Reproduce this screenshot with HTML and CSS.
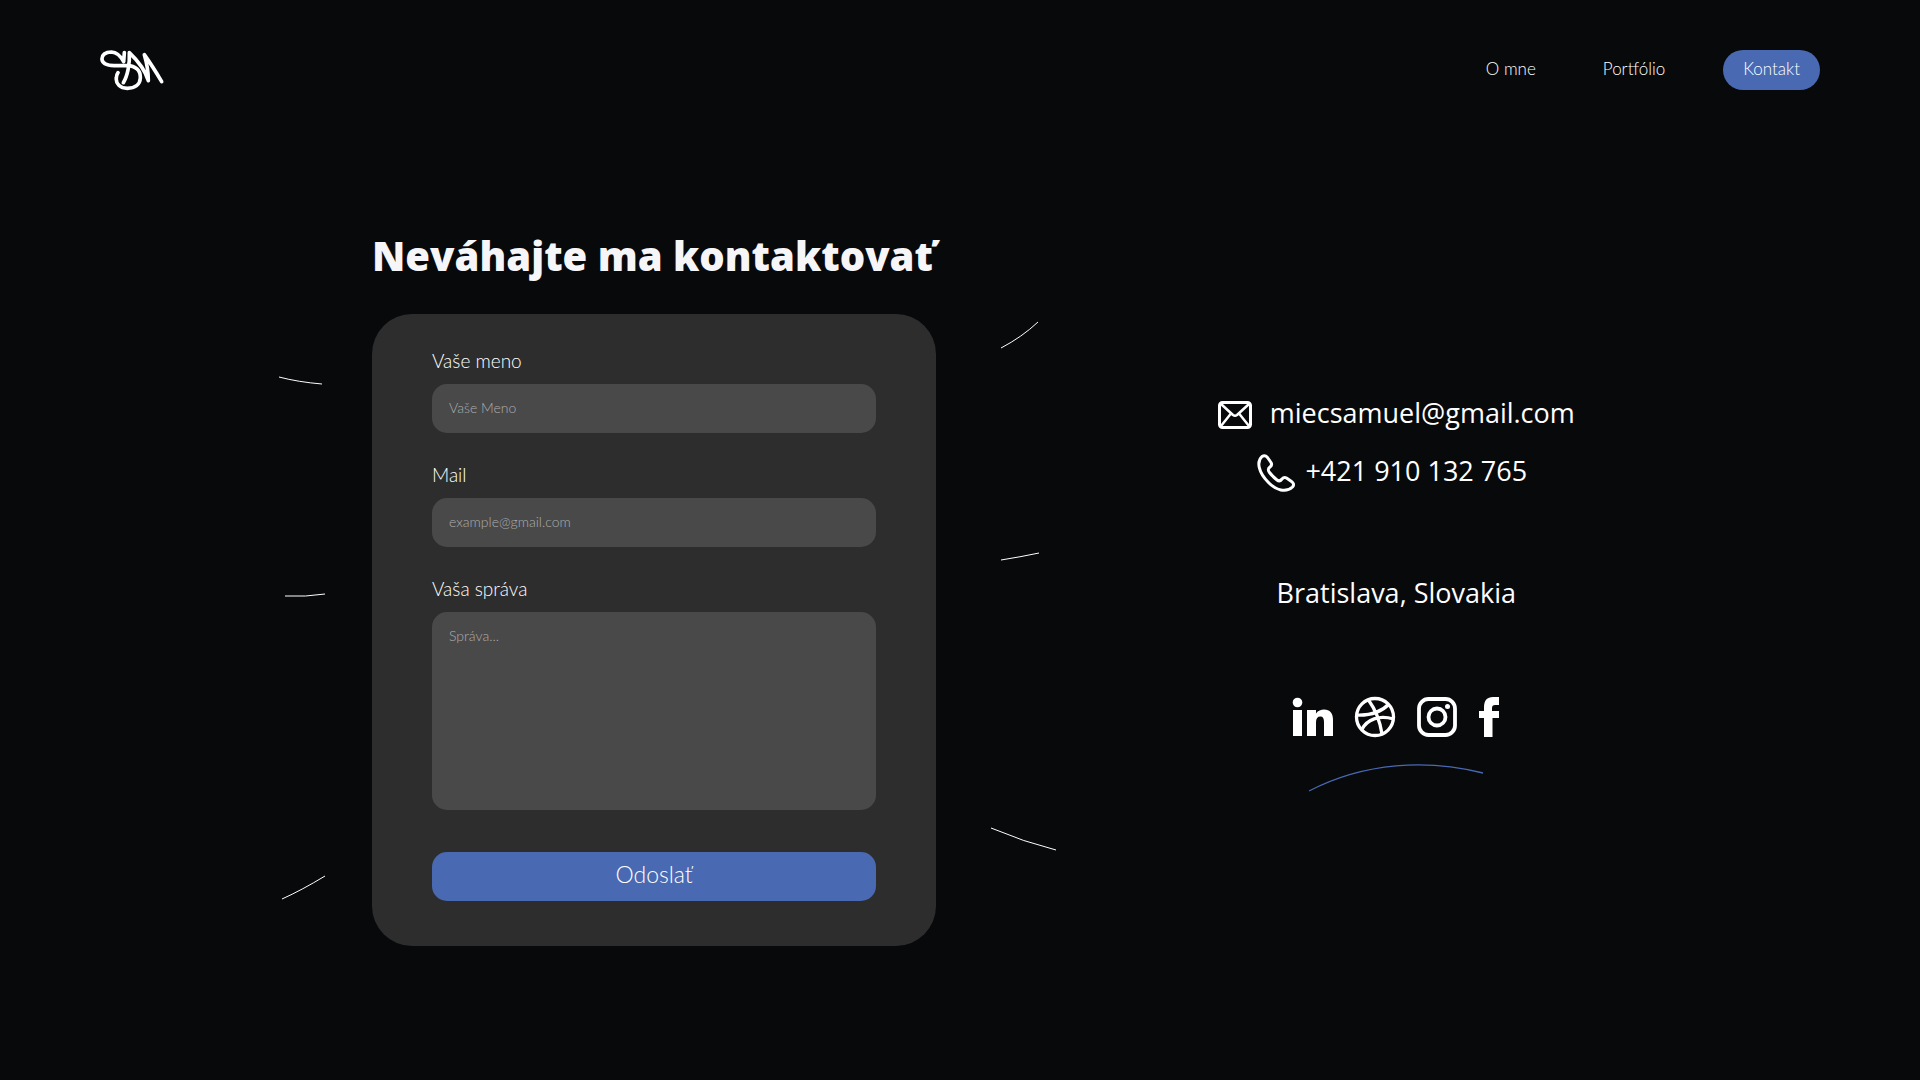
FILE: index.html
```html
<!DOCTYPE html>
<html lang="sk">
<head>
<meta charset="utf-8">
<meta name="viewport" content="width=device-width, initial-scale=1">
<title>Kontakt</title>
<link rel="stylesheet" href="styles.css">
</head>
<body>
<header class="header">
  <a class="logo" href="#" aria-label="Domov">
    <svg width="65" height="42" viewBox="0 0 195 126" fill="none" stroke="#fff" stroke-width="11" stroke-linecap="round" stroke-linejoin="round">
      <path d="M73 8L71 35C62 18 51 7 34 6C16 6 5 15 6 28C7 41 20 46 42 47H82C106 48 122 60 121 84C120 104 105 115 82 115C60 115 47 101 49 84C49 76 51 72 54 68"/>
      <path d="M70 98C82 79 90 43 88 8C108 27 135 60 145 92C145 66 139 34 133 14C148 35 168 66 185 95"/>
    </svg>
  </a>
  <nav class="nav">
    <a class="nav-link" href="#">O mne</a>
    <a class="nav-link" href="#">Portfólio</a>
    <a class="nav-link nav-active" href="#">Kontakt</a>
  </nav>
</header>
<main class="main">
  <section class="form-side">
    <h1 class="title">Neváhajte ma kontaktovať</h1>
    <form class="card">
      <svg class="strokes strokes-left" width="50" height="530" viewBox="0 0 50 530" fill="none" stroke="#fff" aria-hidden="true">
        <path d="M1 7Q20 12 44 14"/><path d="M7 226Q28 227 47 224"/><path d="M4 529Q24 520 47 506"/>
      </svg>
      <svg class="strokes strokes-right" width="70" height="532" viewBox="0 0 70 532" fill="none" stroke="#fff" aria-hidden="true">
        <path d="M11 28Q32 17 48 2"/><path d="M11 240Q30 237 49 233"/><path d="M1 508Q34 522 66 530"/>
      </svg>
      <div class="field">
        <label class="label" for="name">Vaše meno</label>
        <input class="input" id="name" type="text" placeholder="Vaše Meno">
      </div>
      <div class="field">
        <label class="label" for="mail">Mail</label>
        <input class="input" id="mail" type="email" placeholder="example@gmail.com">
      </div>
      <div class="field">
        <label class="label" for="message">Vaša správa</label>
        <textarea class="input message" id="message" placeholder="Správa..."></textarea>
      </div>
      <button class="submit" type="submit">Odoslať</button>
    </form>
  </section>
  <section class="contact">
    <a class="row row-mail" href="mailto:miecsamuel@gmail.com">
      <svg width="34" height="28" viewBox="0 0 34 28" fill="none" stroke="#fff" stroke-width="3" stroke-linejoin="round" aria-hidden="true">
        <rect x="1.5" y="1.5" width="31" height="25" rx="3"/>
        <path stroke-width="2.5" d="M3 3L15 14Q17 15.500 19 14L31 3M3 25L13 12.500M31 25L21 12.500"/>
      </svg>
      <span class="row-text">miecsamuel@gmail.com</span>
    </a>
    <a class="row row-phone" href="tel:+421910132765">
      <svg width="38" height="38" viewBox="0 0 38 38" fill="none" stroke="#fff" stroke-width="3" stroke-linejoin="round" aria-hidden="true">
        <path d="M5 2.500Q8 0.500 10.500 3.500L14 8.500Q15.500 11 13 13C10.500 15 11 16.500 12.500 18.500Q16 23 20 26C22 27.500 23.500 27 25 25Q27 22.500 29.500 24L34.500 27.500Q38 30 35.500 33C29 39 19 36.500 11 28C2 19 -1 8 5 2.500Z"/>
      </svg>
      <span class="row-text">+421 910 132 765</span>
    </a>
    <p class="place">Bratislava, Slovakia</p>
    <div class="social">
      <a href="#" aria-label="LinkedIn">
        <svg width="42" height="42" viewBox="0 0 42 42" fill="#fff"><circle cx="5.500" cy="6.500" r="4.800"/><path d="M1 14H10V40H1ZM15 14H24V17.500C26 14.500 29 13.500 32 13.500C38 13.500 41 17.500 41 24V40H32V26C32 22.500 31 20.500 28.500 20.500C25.500 20.500 24 22.500 24 26V40H15Z"/></svg>
      </a>
      <a href="#" aria-label="Dribbble">
        <svg width="42" height="42" viewBox="0 0 42 42" fill="none" stroke="#fff" stroke-width="3.300"><circle cx="21" cy="21" r="18.500"/><path d="M2.500 19C15 19.500 27 16.500 35 8M14.500 4C21 13 26 25 28 38M7.500 34C13 23 25 19 39.500 23"/></svg>
      </a>
      <a href="#" aria-label="Instagram">
        <svg width="42" height="42" viewBox="0 0 42 42" fill="none" stroke="#fff" stroke-width="3.800"><rect x="3" y="3" width="36" height="36" rx="9.500"/><circle cx="21" cy="21" r="8.500"/><circle cx="31.500" cy="10.500" r="2.500" fill="#fff" stroke="none"/></svg>
      </a>
      <a href="#" aria-label="Facebook">
        <svg width="22" height="42" viewBox="0 0 22 42" fill="#fff"><path d="M6 41V22H1V15H6V11C6 4.500 9 1 15 1H21V9H17C15 9 14 10 14 12V15H21V22H14.500V41Z"/></svg>
      </a>
    </div>
    <svg class="arc" width="176" height="28" viewBox="0 0 176 28" fill="none" stroke="#4969b2" stroke-width="1.300" aria-hidden="true"><path d="M1 27C57 -2 119 -5 175 9"/></svg>
  </section>
</main>
</body>
</html>
```
FILE: styles.css
```css
* { box-sizing: border-box; }
body {
  margin: 0;
  min-height: 100vh;
  background: #08090b;
  color: #fff;
  font-family: Lato, "Open Sans", sans-serif;
  font-weight: 300;
}
a { color: inherit; text-decoration: none; }
svg { display: block; }
.header {
  display: flex;
  justify-content: space-between;
  align-items: flex-start;
  padding: 50px 100px 0;
}
.nav { display: flex; gap: 27px; }
.nav-link {
  padding: 0 20px 2px;
  border-radius: 20px;
  font-size: 17px;
  line-height: 38px;
  white-space: nowrap;
}
.nav-active { margin-left: 11px; background: #4969b2; }
.main {
  display: grid;
  grid-template-columns: minmax(0, 564fr) minmax(0, 280fr) minmax(0, 360fr);
  padding: 135px 17.900% 60px 19.375%;
}
.title {
  margin: 0 0 29px;
  color: #f6f6f9;
  font: 800 40px/58px "Open Sans", sans-serif;
  white-space: nowrap;
}
.card {
  position: relative;
  display: flex;
  flex-direction: column;
  gap: 30px;
  padding: 35px 60px 45px;
  border-radius: 40px;
  background: #2d2d2d;
}
.field { display: flex; flex-direction: column; gap: 11px; }
.label { font-size: 19px; line-height: 24px; }
.input {
  width: 100%;
  height: 49px;
  padding: 0 17px 2px;
  border: 0;
  border-radius: 15px;
  background: #494949;
  color: #fff;
  font: inherit;
  font-size: 14px;
  line-height: 20px;
}
.input::placeholder { color: #adadad; opacity: 1; }
.message { display: block; height: 198px; padding: 14px 17px; resize: none; }
.submit {
  height: 49px;
  margin-top: 12px;
  padding: 0 0 6px;
  border: 0;
  border-radius: 15px;
  background: #4969b2;
  color: #fff;
  font: inherit;
  font-size: 23px;
}
.strokes { position: absolute; top: 56px; }
.strokes-left { right: calc(100% + 44px); }
.strokes-right { left: calc(100% + 54px); top: 6px; }
.contact {
  grid-column: 3;
  display: flex;
  flex-direction: column;
  align-items: center;
  padding-top: 167px;
  font: 400 27px/38px "Open Sans", sans-serif;
  white-space: nowrap;
}
.row { display: flex; align-items: center; }
.row-text { padding-bottom: 4px; }
.row-mail { gap: 18px; margin-bottom: 16px; }
.row-phone { gap: 10px; padding-right: 8px; }
.place { margin: 80px 0 84px; }
.social { display: flex; gap: 20px; }
.arc { margin-top: 26px; }
```
